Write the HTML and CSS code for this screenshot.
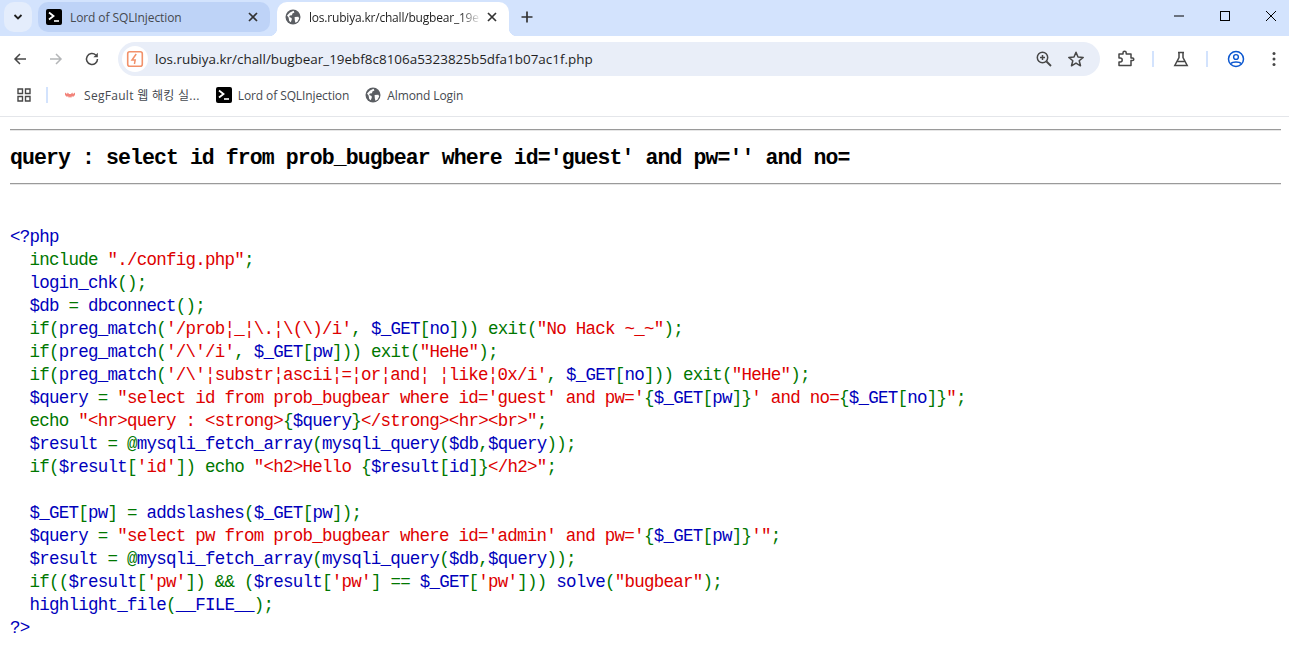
FILE: index.html
```html
<!DOCTYPE html>
<html lang="en">
<head>
    <meta charset="UTF-8">
    <meta name="viewport" content="width=device-width, initial-scale=1.0">
    <title>los.rubiya.kr/chall/bugbear</title>
    <link rel="stylesheet" href="styles.css">
</head>
<body>
    <svg class="defs" width="0" height="0">
        <symbol id="term" viewBox="0 0 16 16">
            <rect width="16" height="16" rx="2" fill="#000"/>
            <path d="M3 3.500 7.500 7 3 10.500" fill="none" stroke="#fff" stroke-width="1.800"/>
            <path d="M8 12h5" stroke="#fff" stroke-width="1.600"/>
        </symbol>
        <symbol id="globe" viewBox="0 0 16 16">
            <circle cx="8" cy="8" r="7.500" fill="#5b5e63"/>
            <path d="M2 6.500 5 3.600 8.600 1.800l.8 1.600-2 1.200-.4 1.600-2.200.2-.6 1.600 2.400 1 .2 1.600-1 2.600-1.600-1.200-.6-3.400zM9.600 8l3.800-.2.8 1.600-1.800 3.400-2 1-.6-2.600z" fill="#fff"/>
        </symbol>
        <symbol id="closex" viewBox="0 0 10 10">
            <path d="M1 1l8 8M9 1 1 9" stroke="#333" stroke-width="1.700"/>
        </symbol>
    </svg>

    <!-- tabs -->
    <div class="tabstrip">
        <button class="tabsearch">
            <svg width="12" height="12" viewBox="0 0 12 12"><path d="M2.500 4 6 7.500 9.500 4" fill="none" stroke="#1f1f1f" stroke-width="1.800"/></svg>
        </button>
        <div class="tab">
            <svg class="fav" width="16" height="16"><use href="#term"/></svg>
            <span class="tabtitle">Lord of SQLInjection</span>
            <svg class="tabclose" width="10" height="10"><use href="#closex"/></svg>
        </div>
        <div class="tab active">
            <svg class="fav" width="16" height="16"><use href="#globe"/></svg>
            <span class="tabtitle fade">los.rubiya.kr/chall/bugbear_19e</span>
            <svg class="tabclose" width="10" height="10"><use href="#closex"/></svg>
        </div>
        <svg class="newtab" width="14" height="14" viewBox="0 0 14 14"><path d="M7 1.500v11M1.500 7h11" stroke="#333" stroke-width="1.700"/></svg>
        <div class="winctl">
            <span class="winbtn"><svg width="12" height="12" viewBox="0 0 12 12"><path d="M1 6h10" stroke="#000" stroke-width="1"/></svg></span>
            <span class="winbtn"><svg width="12" height="12" viewBox="0 0 12 12"><rect x="1.500" y="1.500" width="9" height="9" fill="none" stroke="#000"/></svg></span>
            <span class="winbtn"><svg width="12" height="12" viewBox="0 0 12 12"><path d="M1 1l10 10M11 1 1 11" stroke="#000" stroke-width="1"/></svg></span>
        </div>
    </div>

    <!-- toolbar -->
    <div class="toolbar">
        <svg class="navicon" width="16" height="16" viewBox="0 0 16 16"><path d="M14 8H3M8 3 3 8l5 5" fill="none" stroke="#474747" stroke-width="1.500"/></svg>
        <svg class="navicon" width="16" height="16" viewBox="0 0 16 16"><path d="M2 8h11M8 3l5 5-5 5" fill="none" stroke="#b4b6b8" stroke-width="1.500"/></svg>
        <svg class="navicon" width="16" height="16" viewBox="0 0 16 16"><path d="M13.500 8A5.500 5.500 0 1 1 11.800 4" fill="none" stroke="#474747" stroke-width="1.500"/><path d="M13.800 1.800v4.400H9.400z" fill="#474747"/></svg>
        <div class="omnibox">
            <span class="sitebadge">
                <svg width="18" height="18" viewBox="0 0 18 18"><rect x="1.700" y="1.700" width="14.600" height="14.600" rx="2" fill="#fff" stroke="#f2916a" stroke-width="1.600"/><path d="M10.200 4 6 10h3.200L8.400 14" fill="none" stroke="#f2916a" stroke-width="1.500"/></svg>
            </span>
            <span class="url">los.rubiya.kr/chall/bugbear_19ebf8c8106a5323825b5dfa1b07ac1f.php</span>
            <svg class="zoomicon" width="18" height="18" viewBox="0 0 18 18"><circle cx="7.500" cy="7.500" r="5.200" fill="none" stroke="#474747" stroke-width="1.500"/><path d="M11.500 11.500 16 16" stroke="#474747" stroke-width="1.800"/><path d="M5 7.500h5M7.500 5v5" stroke="#474747" stroke-width="1.500"/></svg>
            <svg class="staricon" width="18" height="18" viewBox="0 0 18 18"><path d="M9 2.200 11 7l5.200.4-4 3.400 1.300 5L9 13.100l-4.500 2.700 1.300-5-4-3.400L7 7z" fill="none" stroke="#474747" stroke-width="1.500" stroke-linejoin="round"/></svg>
        </div>
        <div class="actions">
            <svg class="ext" width="18" height="18" viewBox="0 0 18 18"><path d="M2 4h4V2.800a1.600 1.600 0 0 1 3.200 0V4H14v4h1.500a1.300 1.300 0 0 1 0 2.600H14V15.500H2V12h1.200a2 2 0 0 0 0-4H2z" fill="none" stroke="#474747" stroke-width="1.500" stroke-linejoin="round"/></svg>
            <span class="vsep"></span>
            <svg width="16" height="16" viewBox="0 0 16 16"><path d="M5 1.500h6M6 1.500v5L1.800 14.500h12.400L10 6.500v-5M4.500 10.500h7" fill="none" stroke="#474747" stroke-width="1.500"/></svg>
            <span class="vsep"></span>
            <svg width="18" height="18" viewBox="0 0 18 18"><circle cx="9" cy="9" r="7.500" fill="none" stroke="#0b57d0" stroke-width="1.500"/><circle cx="9" cy="7" r="2.400" fill="none" stroke="#0b57d0" stroke-width="1.400"/><path d="M4 13.500c1.500-2 8.500-2 10 0" fill="none" stroke="#0b57d0" stroke-width="1.400"/></svg>
            <svg class="dots" width="4" height="16" viewBox="0 0 4 16"><circle cx="2" cy="2.500" r="1.500" fill="#474747"/><circle cx="2" cy="8" r="1.500" fill="#474747"/><circle cx="2" cy="13.500" r="1.500" fill="#474747"/></svg>
        </div>
    </div>

    <!-- bookmarks -->
    <div class="bookmarks">
        <svg class="apps" width="14" height="14" viewBox="0 0 14 14"><path d="M1 1h4.500v4.500H1zM8.500 1H13v4.500H8.500zM1 8.500h4.500V13H1zM8.500 8.500H13V13H8.500z" fill="none" stroke="#474747" stroke-width="1.400"/></svg>
        <span class="bmsep"></span>
        <span class="bm segfault">
            <svg class="fav" width="14" height="14" viewBox="0 0 14 14"><path d="M2 4.500l2 1.500.8-1.500L6 6h2l1.200-1.500L10 6l2-1.500v2.500l-2 2-1-1-1 2-1-1.500-1 1.500-1-2-1 1-2-2z" fill="#f2837a"/></svg>
            <span class="bmtext">SegFault 웹 해킹 실...</span>
        </span>
        <span class="bm">
            <svg class="fav" width="16" height="16"><use href="#term"/></svg>
            <span class="bmtext">Lord of SQLInjection</span>
        </span>
        <span class="bm">
            <svg class="fav" width="16" height="16"><use href="#globe"/></svg>
            <span class="bmtext">Almond Login</span>
        </span>
    </div>

    <!-- page -->
    <div class="page">
        <hr>
        <strong class="query">query : select id from prob_bugbear where id='guest' and pw='' and no=</strong>
        <hr>
<pre class="src"><span class="d">&lt;?php</span>
<span class="k">  include </span><span class="s">"./config.php"</span><span class="k">;</span>
<span class="d">  login_chk</span><span class="k">();</span>
<span class="d">  $db </span><span class="k">= </span><span class="d">dbconnect</span><span class="k">();</span>
<span class="k">  if(</span><span class="d">preg_match</span><span class="k">(</span><span class="s">'/prob¦_¦\.¦\(\)/i'</span><span class="k">, </span><span class="d">$_GET</span><span class="k">[</span><span class="d">no</span><span class="k">])) exit(</span><span class="s">"No Hack ~_~"</span><span class="k">);</span>
<span class="k">  if(</span><span class="d">preg_match</span><span class="k">(</span><span class="s">'/\'/i'</span><span class="k">, </span><span class="d">$_GET</span><span class="k">[</span><span class="d">pw</span><span class="k">])) exit(</span><span class="s">"HeHe"</span><span class="k">);</span>
<span class="k">  if(</span><span class="d">preg_match</span><span class="k">(</span><span class="s">'/\'¦substr¦ascii¦=¦or¦and¦ ¦like¦0x/i'</span><span class="k">, </span><span class="d">$_GET</span><span class="k">[</span><span class="d">no</span><span class="k">])) exit(</span><span class="s">"HeHe"</span><span class="k">);</span>
<span class="d">  $query </span><span class="k">= </span><span class="s">"select id from prob_bugbear where id='guest' and pw='</span><span class="k">{</span><span class="d">$_GET</span><span class="k">[</span><span class="d">pw</span><span class="k">]}</span><span class="s">' and no=</span><span class="k">{</span><span class="d">$_GET</span><span class="k">[</span><span class="d">no</span><span class="k">]}</span><span class="s">"</span><span class="k">;</span>
<span class="k">  echo </span><span class="s">"&lt;hr&gt;query : &lt;strong&gt;</span><span class="k">{</span><span class="d">$query</span><span class="k">}</span><span class="s">&lt;/strong&gt;&lt;hr&gt;&lt;br&gt;"</span><span class="k">;</span>
<span class="d">  $result </span><span class="k">= @</span><span class="d">mysqli_fetch_array</span><span class="k">(</span><span class="d">mysqli_query</span><span class="k">(</span><span class="d">$db</span><span class="k">,</span><span class="d">$query</span><span class="k">));</span>
<span class="k">  if(</span><span class="d">$result</span><span class="k">[</span><span class="s">'id'</span><span class="k">]) echo </span><span class="s">"&lt;h2&gt;Hello </span><span class="k">{</span><span class="d">$result</span><span class="k">[</span><span class="d">id</span><span class="k">]}</span><span class="s">&lt;/h2&gt;"</span><span class="k">;</span>

<span class="d">  $_GET</span><span class="k">[</span><span class="d">pw</span><span class="k">] = </span><span class="d">addslashes</span><span class="k">(</span><span class="d">$_GET</span><span class="k">[</span><span class="d">pw</span><span class="k">]);</span>
<span class="d">  $query </span><span class="k">= </span><span class="s">"select pw from prob_bugbear where id='admin' and pw='</span><span class="k">{</span><span class="d">$_GET</span><span class="k">[</span><span class="d">pw</span><span class="k">]}</span><span class="s">'"</span><span class="k">;</span>
<span class="d">  $result </span><span class="k">= @</span><span class="d">mysqli_fetch_array</span><span class="k">(</span><span class="d">mysqli_query</span><span class="k">(</span><span class="d">$db</span><span class="k">,</span><span class="d">$query</span><span class="k">));</span>
<span class="k">  if((</span><span class="d">$result</span><span class="k">[</span><span class="s">'pw'</span><span class="k">]) &amp;&amp; (</span><span class="d">$result</span><span class="k">[</span><span class="s">'pw'</span><span class="k">] == </span><span class="d">$_GET</span><span class="k">[</span><span class="s">'pw'</span><span class="k">])) </span><span class="d">solve</span><span class="k">(</span><span class="s">"bugbear"</span><span class="k">);</span>
<span class="d">  highlight_file</span><span class="k">(</span><span class="d">__FILE__</span><span class="k">);</span>
<span class="d">?&gt;</span></pre>
    </div>
</body>
</html>
```

FILE: styles.css
```css
html, body {
    margin: 0;
    padding: 0;
    height: 655px;
    overflow: hidden;
    background: #fff;
}
body {
    font-family: "Open Sans", "Noto Sans CJK KR", sans-serif;
    font-size: 12px;
    color: #1f1f1f;
}
.defs {
    display: block;
    height: 0;
}
svg {
    flex: none;
    display: block;
}

/* tabs */
.tabstrip {
    display: flex;
    align-items: flex-start;
    height: 36px;
    background: #d3e3fd;
    padding: 2px 0 0 4px;
    box-sizing: border-box;
}
.tabsearch {
    width: 28px;
    height: 30px;
    margin-right: 6px;
    padding: 0;
    border: none;
    border-radius: 10px;
    background: #e4edfc;
    display: flex;
    align-items: center;
    justify-content: center;
}
.tab {
    position: relative;
    width: 232px;
    height: 30px;
    margin-right: 7px;
    padding: 0 10px 0 8px;
    box-sizing: border-box;
    display: flex;
    align-items: center;
    background: #bed3f7;
    border-radius: 10px;
    color: #45494f;
}
.tab.active {
    height: 34px;
    padding-bottom: 4px;
    background: #fff;
    border-radius: 10px 10px 0 0;
    color: #1f1f1f;
}
/* little flares at the foot of the active tab */
.tab.active::before,
.tab.active::after {
    content: "";
    position: absolute;
    bottom: 0;
    width: 8px;
    height: 8px;
}
.tab.active::before {
    left: -8px;
    background: radial-gradient(circle at 0 0, #d3e3fd 8px, #fff 8.500px);
}
.tab.active::after {
    right: -8px;
    background: radial-gradient(circle at 100% 0, #d3e3fd 8px, #fff 8.500px);
}
.tab .fav {
    margin-right: 8px;
}
.tabtitle {
    flex: 1;
    letter-spacing: -0.1px;
    white-space: nowrap;
}
.fade {
    letter-spacing: -0.2px;
    -webkit-mask-image: linear-gradient(to right, #000 88%, transparent);
    mask-image: linear-gradient(to right, #000 88%, transparent);
}
.tabclose {
    margin: 0 2px 0 6px;
}
.newtab {
    margin: 8px 0 0 4px;
}
.winctl {
    display: flex;
    margin: 2px -5px 0 auto;
}
.winbtn {
    width: 46px;
    height: 24px;
    display: flex;
    align-items: center;
    justify-content: center;
}

/* toolbar */
.toolbar {
    display: flex;
    align-items: center;
    height: 44px;
    padding: 2px 0 0 12px;
    box-sizing: border-box;
}
.navicon {
    margin-right: 20px;
}
.toolbar .navicon:nth-child(3) {
    margin-right: 18px;
}
.omnibox {
    width: 982px;
    height: 34px;
    padding: 0 15px 0 4px;
    box-sizing: border-box;
    display: flex;
    align-items: center;
    background: #e9eef8;
    border-radius: 17px;
}
.sitebadge {
    width: 26px;
    height: 26px;
    margin-right: 7px;
    display: flex;
    align-items: center;
    justify-content: center;
    background: #fff;
    border-radius: 50%;
}
.url {
    flex: 1;
    font-size: 13.450px;
    color: #1f1f1f;
    white-space: nowrap;
}
.zoomicon {
    margin-right: 14px;
}
.actions {
    flex: 1;
    display: flex;
    align-items: center;
    padding-left: 17px;
}
.vsep {
    width: 2px;
    height: 16px;
    margin: 0 19px 0 17px;
    background: #d3e3fd;
}
.dots {
    margin-left: 27px;
}

/* bookmarks */
.bookmarks {
    display: flex;
    align-items: center;
    height: 37px;
    padding: 0 0 6px 17px;
    box-sizing: border-box;
    border-bottom: 1px solid #e4e6ea;
    color: #45494f;
}
.apps {
    margin-right: 15px;
}
.bmsep {
    width: 2px;
    height: 16px;
    margin-right: 15px;
    background: #d3e3fd;
}
.bm {
    display: flex;
    align-items: center;
    margin-right: 16px;
    white-space: nowrap;
}
.bmtext {
    letter-spacing: -0.1px;
}
.bm .fav {
    margin-right: 6px;
}
.segfault .fav {
    margin-right: 7px;
}
.segfault .bmtext {
    letter-spacing: 0.3px;
}

/* page */
.page {
    padding: 12px 8px 0 10px;
    color: #000;
}
hr {
    margin: 0;
    border: none;
    border-top: 1px solid #9a9a9a;
    border-bottom: 1px solid #e6e6e6;
}
.query {
    display: block;
    font-family: "Liberation Mono", monospace;
    font-size: 21.500px;
    letter-spacing: -0.910px;
    line-height: 26px;
    padding: 14px 0 12px;
}
.src {
    margin: 41px 0 0;
    font-family: "Liberation Mono", monospace;
    font-size: 17.500px;
    letter-spacing: -0.750px;
    line-height: 23px;
}
.d { color: #0000bb; }
.k { color: #007700; }
.s { color: #dd0000; }
```
